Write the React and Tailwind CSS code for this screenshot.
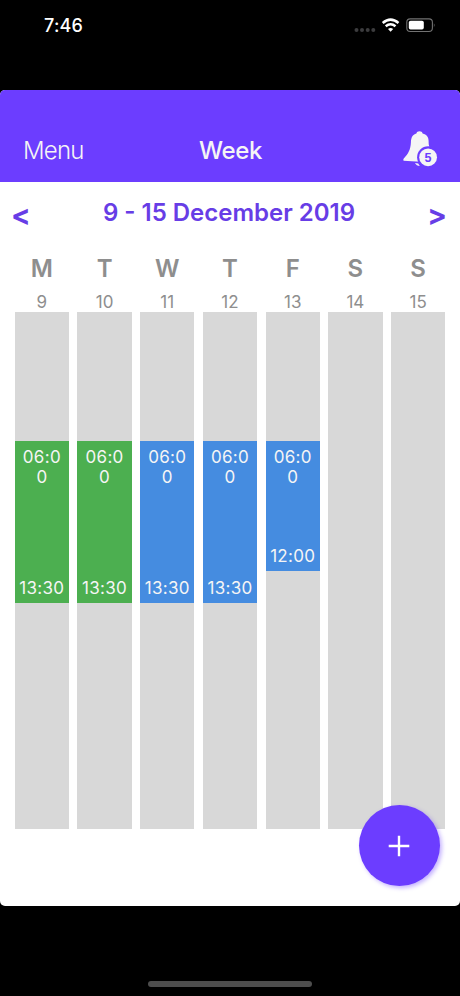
// src/screens/WeekScreen.jsx

const DAY_HEIGHT = 516.5;

const days = [
  { label: "M", date: 9, shift: { from: "06:00", to: "13:30", color: "bg-[#4caf50]" } },
  { label: "T", date: 10, shift: { from: "06:00", to: "13:30", color: "bg-[#4caf50]" } },
  { label: "W", date: 11, shift: { from: "06:00", to: "13:30", color: "bg-[#458ce0]" } },
  { label: "T", date: 12, shift: { from: "06:00", to: "13:30", color: "bg-[#458ce0]" } },
  { label: "F", date: 13, shift: { from: "06:00", to: "12:00", color: "bg-[#458ce0]" } },
  { label: "S", date: 14 },
  { label: "S", date: 15 },
];

const toOffset = (time) => {
  const [h, m] = time.split(":").map(Number);
  return ((h + m / 60) / 24) * DAY_HEIGHT;
};

const StatusBar = () => (
  <div className="flex h-[90px] items-start justify-between pl-[44px] pr-[24px] pt-[14px]">
    <span className="text-[18px] leading-[24px] font-medium tracking-[0.2px] text-white">
      7:46
    </span>
    <div className="flex pt-[3px]">
      <svg width="82" height="18" viewBox="354 17 82 18">
        <g fill="#3c3c3e">
          <circle cx="356.5" cy="30" r="2" />
          <circle cx="362" cy="30" r="2" />
          <circle cx="367.7" cy="30" r="2" />
          <circle cx="373.3" cy="30" r="2" />
        </g>
        <g fill="none" stroke="#fff" strokeWidth="2.5">
          <path d="M382.7 23 Q390.6 16.2 398.5 23" />
          <path d="M385.7 26.3 Q390.6 22.2 395.5 26.3" />
        </g>
        <path d="M388 29 Q390.6 26.8 393.2 29 L390.6 31.8 Z" fill="#fff" />
        <rect x="406.8" y="18.9" width="25.6" height="12.6" rx="3.4" fill="none" stroke="#727272" strokeWidth="1.1" />
        <rect x="408.8" y="20.8" width="15" height="8.8" rx="1.8" fill="#fff" />
        <path d="M433.9 23.2 Q435.6 25.2 433.9 27.2 Z" fill="#727272" />
      </svg>
    </div>
  </div>
);

const BellIcon = () => (
  <svg width="36" height="38" viewBox="402 131 36 38">
    <path
      d="M419.5 132.2C421.1 132.2 422.3 133 422.6 134.4C426.6 135.2 428.8 138.3 428.6 142.3C428.5 146.5 429.5 149.5 432 152.5L430 163L416 162.5L403.6 161.7C403.1 160.7 403.4 160 404 159.3C408.3 154.8 410.6 150.5 410.9 143.5C411.1 138.5 412.5 135.5 416.4 134.4C416.7 133 417.9 132.2 419.5 132.2Z"
      fill="#f5f5f5"
    />
    <circle cx="428.1" cy="158.3" r="11" fill="#6c3dff" />
    <path d="M415 164q1.5 3 4.8 3l-1.6-2.6z" fill="#f5f5f5" />
    <circle cx="428.1" cy="158.3" r="8.9" fill="#f5f5f5" />
    <text
      x="428.1"
      y="162.7"
      textAnchor="middle"
      className="font-['Liberation_Sans',sans-serif]"
      fontSize="12.5"
      fontWeight="700"
      fill="#6c3dff"
    >
      5
    </text>
  </svg>
);

const Header = () => (
  <header className="grid h-[92px] grid-cols-3 items-end bg-[#6c3dff] pb-[14px] pl-[23px] pr-[22px] text-[24px] leading-[34px] text-[#f5f5f5]">
    <span className="font-light tracking-[-0.8px]">Menu</span>
    <span className="text-center font-medium tracking-[-0.4px]">Week</span>
    <span className="flex justify-end">
      <BellIcon />
    </span>
  </header>
);

const Shift = ({ shift }) => {
  const top = toOffset(shift.from);
  const height = toOffset(shift.to) - top;

  return (
    <div style={{ paddingTop: top }}>
      <div
        className={`flex flex-col justify-between px-[6px] pt-[6px] pb-[5px] text-center text-[17px] leading-[20px] tracking-[0.3px] text-[#f5f5f5] ${shift.color}`}
        style={{ height }}
      >
        {/* start time breaks after the fourth character */}
        <span className="mx-auto w-[41px] break-all">{shift.from}</span>
        <span className="-mx-[6px]">{shift.to}</span>
      </div>
    </div>
  );
};

const WeekGrid = () => (
  <div className="grid grid-cols-7 gap-x-[8.5px] px-[14.8px]">
    {days.map((day) => (
      <div key={day.date} className="flex flex-col text-center text-[#8e8e8e]">
        <span className="h-[39.8px] pt-px text-[24px] leading-[32px] font-semibold">
          {day.label}
        </span>
        <span className="h-[20.5px] text-[17px] leading-[21px]">
          {day.date}
        </span>
        <div className="h-[516.5px] bg-[#d8d8d8]">
          {day.shift && <Shift shift={day.shift} />}
        </div>
      </div>
    ))}
  </div>
);

export default function App() {
  return (
    <div className="flex h-[996px] w-[460px] flex-col bg-black font-['Inter',sans-serif]">
      <StatusBar />

      <main className="relative h-[816px] overflow-hidden rounded-[5px] bg-white">
        <Header />

        {/* Week switcher */}
        <div className="flex h-[70px] items-start justify-between pl-[11px] pr-[13px] pt-[15px] text-[24px] leading-[32px] font-semibold text-[#673de6]">
          <button className="pt-[2px] text-[29px] font-bold">&lt;</button>
          <h1>9 - 15 December 2019</h1>
          <button className="pt-[2px] text-[29px] font-bold">&gt;</button>
        </div>

        <WeekGrid />

        <button className="absolute right-[20px] bottom-[20px] flex size-[81px] items-center justify-center rounded-full bg-[#6c3dff] pr-px shadow-[2px_2px_4px_rgba(108,61,255,0.4)]">
          <svg width="22" height="22" viewBox="0 0 22 22" stroke="#fff" strokeWidth="2.4">
            <path d="M11 0.7v20.6M0.7 11h20.6" />
          </svg>
        </button>
      </main>

      {/* Home indicator */}
      <div className="mx-auto mt-[75px] h-[6px] w-[164px] rounded-full bg-[#4d4d4d]" />
    </div>
  );
}
